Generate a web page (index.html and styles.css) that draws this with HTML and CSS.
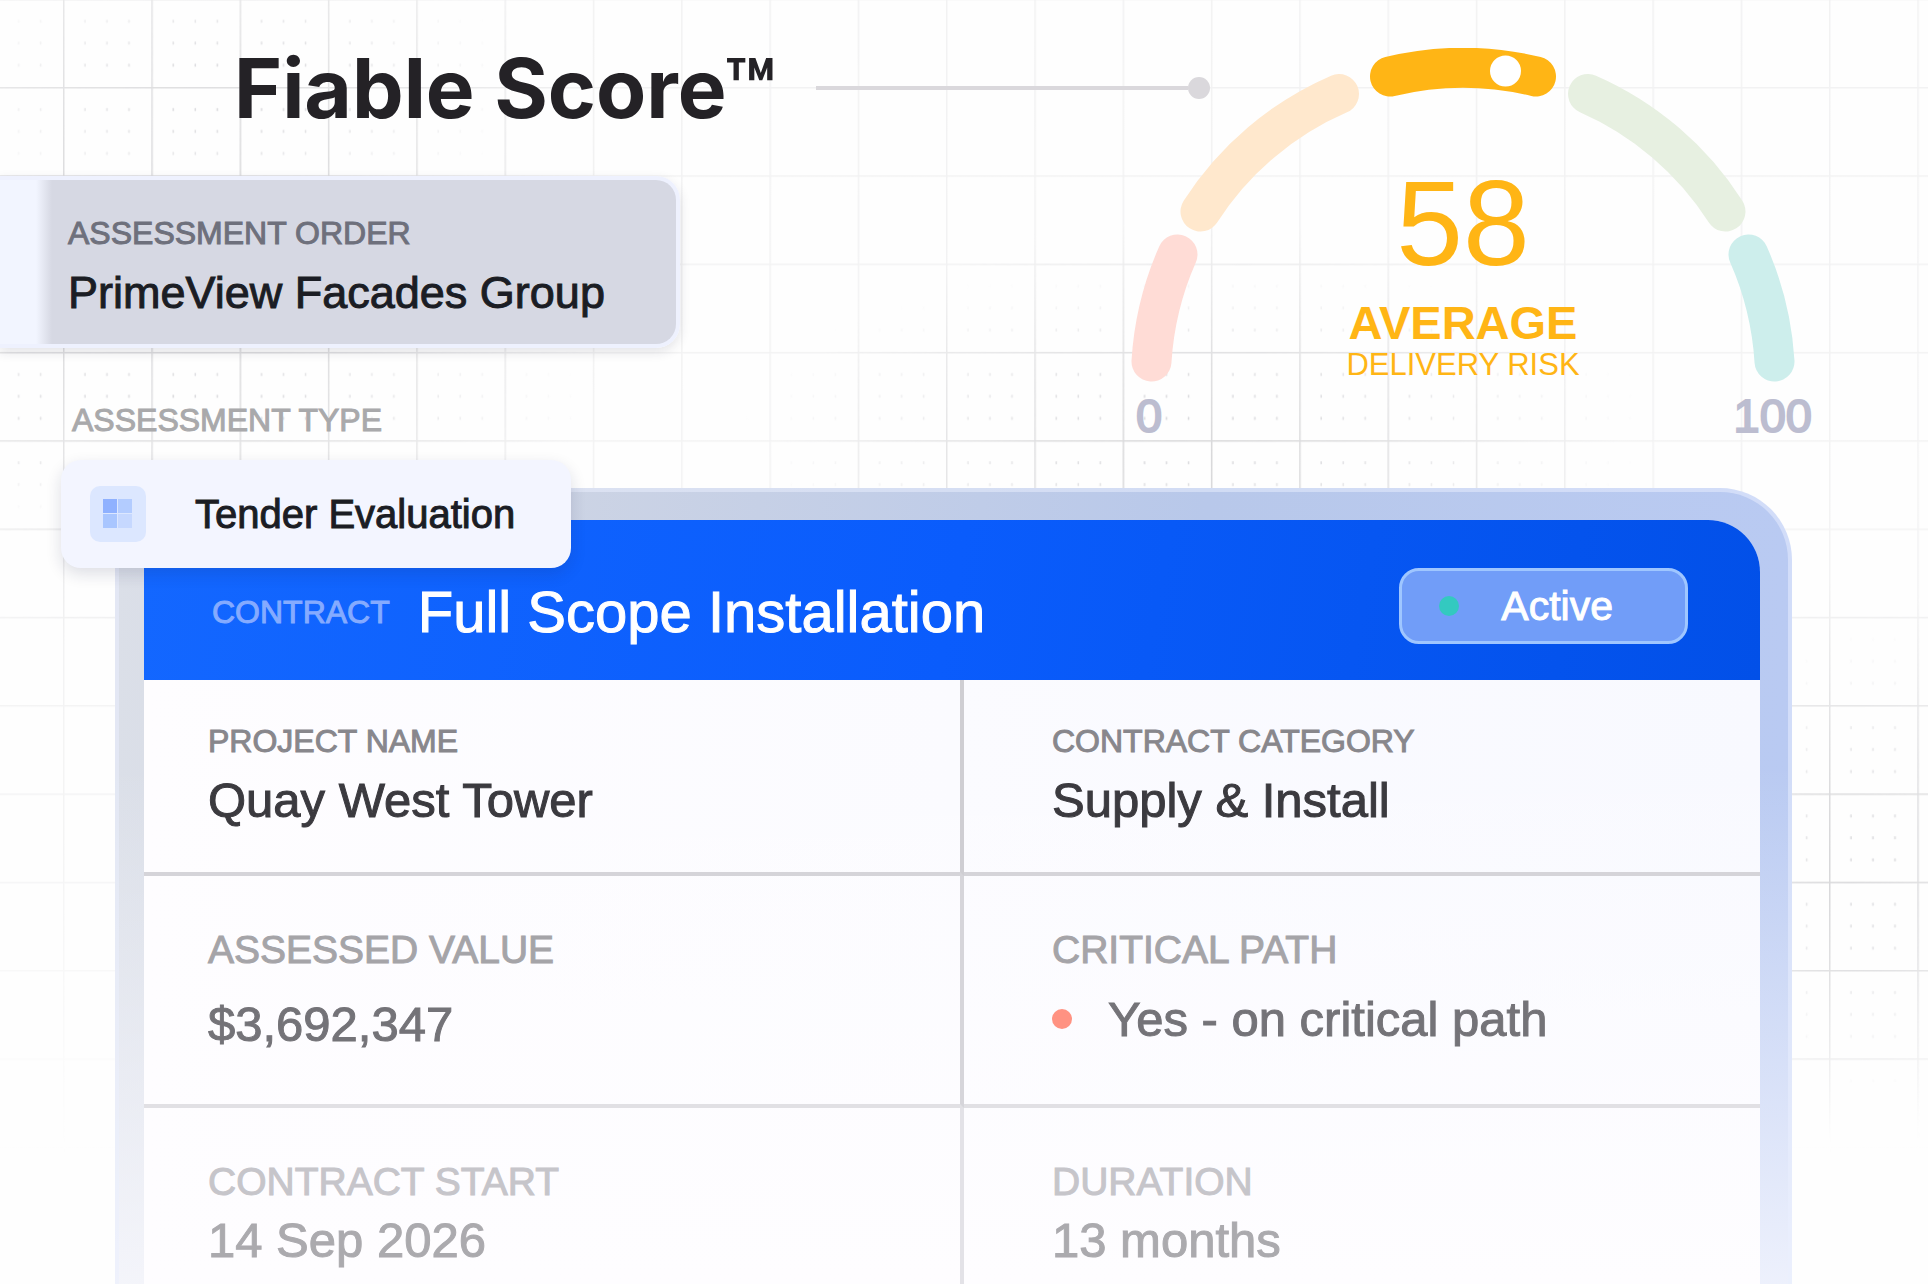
FILE: index.html
```
<!DOCTYPE html>
<html lang="en">

<head>
    <meta charset="UTF-8">
    <meta name="viewport" content="width=device-width, initial-scale=1.0">
    <title>Fiable Score</title>
    <link rel="stylesheet" href="styles.css">
</head>

<body>
    <svg class="backdrop" aria-hidden="true">
        <defs>
            <pattern id="lines" x="63" y="87" width="88.3" height="88.3" patternUnits="userSpaceOnUse">
                <path d="M0.75 0V88.3M0 0.75H88.3" stroke="#d6d6d8" stroke-width="1.5" />
            </pattern>
            <pattern id="dots" x="63" y="87" width="88.3" height="88.3" patternUnits="userSpaceOnUse">
                <path d="M22 21v3M44 21v3M66 21v3M22 43v3M44 43v3M66 43v3M22 65v3M44 65v3M66 65v3" stroke="#d6d6d9" stroke-width="1.5" />
            </pattern>
            <radialGradient id="blob">
                <stop offset="0" stop-color="#fff" />
                <stop offset="0.4" stop-color="#fff" stop-opacity="0.7" />
                <stop offset="1" stop-color="#fff" stop-opacity="0" />
            </radialGradient>
            <linearGradient id="fade" x1="0" y1="0" x2="0" y2="1">
                <stop offset="0" stop-color="#fff" stop-opacity="0.3" />
                <stop offset="0.65" stop-color="#fff" stop-opacity="0.25" />
                <stop offset="0.9" stop-color="#fff" stop-opacity="0" />
            </linearGradient>
            <mask id="line-mask">
                <rect width="100%" height="100%" fill="url(#fade)" />
                <ellipse cx="200" cy="250" rx="420" ry="420" fill="url(#blob)" />
                <ellipse cx="1200" cy="460" rx="420" ry="240" fill="url(#blob)" />
                <ellipse cx="1850" cy="860" rx="220" ry="280" fill="url(#blob)" />
            </mask>
            <mask id="dot-mask">
                <ellipse cx="230" cy="90" rx="300" ry="140" fill="url(#blob)" />
                <ellipse cx="180" cy="410" rx="420" ry="120" fill="url(#blob)" />
                <ellipse cx="1200" cy="430" rx="460" ry="170" fill="url(#blob)" />
                <ellipse cx="1880" cy="860" rx="180" ry="240" fill="url(#blob)" />
            </mask>
        </defs>
        <rect width="100%" height="100%" fill="url(#lines)" mask="url(#line-mask)" />
        <rect width="100%" height="100%" fill="url(#dots)" mask="url(#dot-mask)" />
    </svg>

    <main>
        <section class="hero">
            <div class="intro">
                <div class="title-row">
                    <h1>Fiable Score™</h1>
                    <span class="connector"></span>
                </div>
                <div class="order">
                    <p class="label">ASSESSMENT ORDER</p>
                    <p class="order-name">PrimeView Facades Group</p>
                </div>
                <p class="label type-label">ASSESSMENT TYPE</p>
            </div>
            <div class="gauge">
                <svg class="gauge-arc" viewBox="1130 48 666 334" role="img" aria-label="Score 58 out of 100">
                    <g fill="none" stroke-width="40" stroke-linecap="round">
                        <path d="M1151.5 361.5A312 312 0 0 1 1177.5 254.5" stroke="#ffdcd6" />
                        <path d="M1200.5 211.5A312 312 0 0 1 1339 94" stroke="#ffe8cd" />
                        <path d="M1390 76.5A312 312 0 0 1 1536 76.5" stroke="#ffb515" />
                        <path d="M1588 94A312 312 0 0 1 1725.5 211.5" stroke="#e7f0e1" />
                        <path d="M1748.5 254.5A312 312 0 0 1 1774.5 361.5" stroke="#cdeeec" />
                    </g>
                    <circle cx="1505.5" cy="71" r="15.5" fill="#fff" />
                </svg>
                <div class="reading">
                    <span class="reading-score">58</span>
                    <strong>AVERAGE</strong>
                    <span class="reading-note">DELIVERY RISK</span>
                </div>
                <div class="scale">
                    <span>0</span>
                    <span>100</span>
                </div>
            </div>
        </section>

        <div class="type">
            <svg class="type-icon" viewBox="0 0 56 56" aria-hidden="true">
                <rect width="56" height="56" rx="10" fill="#dce7ff" />
                <rect x="13" y="13" width="14" height="14" fill="#8fb1ff" />
                <rect x="28" y="13" width="14" height="14" fill="#b3ccff" />
                <rect x="13" y="28" width="14" height="14" fill="#a9c6ff" />
                <rect x="28" y="28" width="14" height="14" fill="#c6d8ff" />
            </svg>
            <span>Tender Evaluation</span>
        </div>

        <section class="card">
            <div class="card-body">
                <header class="card-header">
                    <div class="contract">
                        <span class="label">CONTRACT</span>
                        <h2>Full Scope Installation</h2>
                    </div>
                    <span class="status">Active</span>
                </header>
                <dl class="details">
                    <div class="cell">
                        <dt>PROJECT NAME</dt>
                        <dd>Quay West Tower</dd>
                    </div>
                    <div class="cell">
                        <dt>CONTRACT CATEGORY</dt>
                        <dd>Supply &amp; Install</dd>
                    </div>
                    <div class="cell middle">
                        <dt>ASSESSED VALUE</dt>
                        <dd>$3,692,347</dd>
                    </div>
                    <div class="cell middle critical">
                        <dt>CRITICAL PATH</dt>
                        <dd>Yes - on critical path</dd>
                    </div>
                    <div class="cell last">
                        <dt>CONTRACT START</dt>
                        <dd>14 Sep 2026</dd>
                    </div>
                    <div class="cell last">
                        <dt>DURATION</dt>
                        <dd>13 months</dd>
                    </div>
                </dl>
            </div>
        </section>
    </main>
</body>

</html>
```
FILE: styles.css
```
* {
    margin: 0;
    padding: 0;
    box-sizing: border-box;
}

body {
    position: relative;
    min-height: 100vh;
    background: #fefefe;
    font-family: "Liberation Sans", Arial, sans-serif;
    color: #1b1d24;
    overflow-x: hidden;
}

.backdrop {
    position: absolute;
    top: 0;
    left: 0;
    width: 100%;
    height: 100%;
}

main {
    position: relative;
    display: flex;
    flex-direction: column;
    min-height: 100vh;
}

.hero {
    display: flex;
    padding-right: 132px;
}

.intro {
    flex: 1;
    padding-top: 44px;
}

.title-row {
    display: flex;
    align-items: center;
    gap: 40px;
    margin-right: -80px;
    padding-left: 234px;
}

h1 {
    padding-top: 2px;
    font-family: Inter, sans-serif;
    font-size: 82px;
    font-weight: 700;
    line-height: 86px;
    color: #242226;
    white-space: nowrap;
}

/* line that runs from the title to the gauge, ending in a dot */
.connector {
    display: flex;
    flex: 1;
    align-items: center;
}

.connector::before {
    content: "";
    flex: 1;
    height: 4px;
    background: #dad8dc;
}

.connector::after {
    content: "";
    width: 22px;
    height: 22px;
    border-radius: 50%;
    background: #dad8dc;
}

.label {
    font-size: 32px;
    line-height: 32px;
    -webkit-text-stroke: 1px;
}

.order {
    width: 680px;
    max-width: 100%;
    margin-top: 44px;
    padding: 37px 40px 29px 68px;
    border: 4px solid #eef1fe;
    border-left: 0;
    border-radius: 0 24px 24px 0;
    background: linear-gradient(90deg, #f2f5ff 36px, #d6d8e3 52px);
    box-shadow: 0 4px 12px rgba(30, 30, 60, 0.12);
}

.order .label {
    color: #6e707c;
}

.order-name {
    margin-top: 22px;
    font-size: 45px;
    line-height: 44px;
    -webkit-text-stroke: 1px;
}

.type-label {
    margin: 56px 0 24px 72px;
    color: #a9a9ab;
}

.gauge {
    display: grid;
    grid-template-columns: 100%;
    align-content: start;
    width: 666px;
    padding-top: 48px;
}

.gauge-arc,
.reading {
    grid-area: 1 / 1;
}

.gauge-arc {
    display: block;
    width: 100%;
}

.reading {
    display: flex;
    flex-direction: column;
    align-items: center;
    padding-top: 115px;
    color: #ffb515;
}

.reading-score {
    font-size: 120px;
    line-height: 120px;
}

.reading strong {
    margin-top: 16px;
    font-size: 47px;
    line-height: 48px;
}

.reading-note {
    margin-top: 2px;
    font-size: 31px;
    line-height: 32px;
}

.scale {
    display: flex;
    justify-content: space-between;
    margin: 10px -16px 0 6px;
    font-size: 47px;
    line-height: 48px;
    color: #bcbdd0;
    -webkit-text-stroke: 2px;
}

.type {
    position: relative;
    z-index: 1;
    display: flex;
    align-items: center;
    align-self: flex-start;
    gap: 49px;
    margin: 0 0 -80px 61px;
    padding: 26px 56px 26px 29px;
    border-radius: 20px;
    background: #f3f5ff;
    box-shadow: 0 6px 16px rgba(20, 30, 70, 0.14);
    font-size: 40px;
    line-height: 40px;
    -webkit-text-stroke: 1px;
}

.type-icon {
    width: 56px;
    height: 56px;
}

.card {
    display: flex;
    flex: 1;
    margin: 0 136px 0 115px;
    padding: 28px 28px 0 25px;
    border: 4px solid rgba(235, 240, 255, 0.5);
    border-bottom: 0;
    border-radius: 72px 72px 0 0;
    background: linear-gradient(180deg, rgba(255, 255, 255, 0) 35%, rgba(250, 250, 255, 0.8)) border-box,
        linear-gradient(90deg, #dbdfe8, #cdd4e4 25%, #b8c8ea 65%, #b9caf2) border-box;
}

.card-body {
    display: flex;
    flex: 1;
    flex-direction: column;
    border-radius: 48px 52px 0 0;
    background: linear-gradient(180deg, rgba(254, 254, 255, 0) 30%, #fefdff), linear-gradient(90deg, #fefdff, #f8f9ff);
    overflow: hidden;
}

.card-header {
    display: flex;
    justify-content: space-between;
    padding: 48px 72px 36px 68px;
    background: linear-gradient(100deg, #1367ff, #0a5cfc 50%, #0250e8);
    color: #fff;
}

.contract {
    display: flex;
    align-items: center;
    gap: 28px;
    padding: 16px 0 4px;
}

.contract .label {
    color: #85abff;
}

h2 {
    font-size: 58px;
    font-weight: 400;
    line-height: 56px;
    -webkit-text-stroke: 1px;
}

.status {
    display: flex;
    align-items: center;
    gap: 42px;
    padding: 0 72px 0 37px;
    border: 3px solid #9fc6ff;
    border-radius: 20px;
    background: #719df8;
    font-size: 41px;
    line-height: 40px;
    -webkit-text-stroke: 1px;
}

.status::before,
.critical dd::before {
    content: "";
    width: 20px;
    height: 20px;
    border-radius: 50%;
    background: #33c9c0;
}

.details {
    display: grid;
    flex: 1;
    grid-template-columns: 820fr 796fr;
    grid-template-rows: auto auto 1fr;
}

.cell {
    padding: 45px 24px 48px 88px;
    border-bottom: 4px solid #d5d4d9;
}

.cell:nth-child(odd) {
    padding-left: 64px;
    border-right: 4px solid #cfced3;
}

.cell dt {
    font-size: 32px;
    line-height: 32px;
    color: #88878c;
    -webkit-text-stroke: 1px;
}

.cell dd {
    margin-top: 19px;
    font-size: 49px;
    line-height: 48px;
    color: #3b3a3f;
    -webkit-text-stroke: 1px;
}

.cell.middle {
    padding-top: 54px;
    padding-bottom: 56px;
    border-bottom-color: #e1e0e4;
}

.cell.middle:nth-child(odd) {
    border-right-color: #d6d5da;
}

.cell.middle dt,
.cell.last dt {
    font-size: 39px;
    line-height: 40px;
}

.cell.middle dt {
    color: #a5a4a8;
}

.cell.middle dd {
    margin-top: 30px;
    color: #747378;
}

.cell.critical dd {
    display: flex;
    align-items: center;
    gap: 36px;
    margin-top: 25px;
}

.critical dd::before {
    background: #ff9282;
}

.cell.last {
    padding-top: 54px;
    padding-bottom: 16px;
    border-bottom: 0;
}

.cell.last:nth-child(odd) {
    border-right-color: #e3e2e7;
}

.cell.last dt {
    color: #c6c5ca;
}

.cell.last dd {
    margin-top: 14px;
    color: #abaaae;
}
```
